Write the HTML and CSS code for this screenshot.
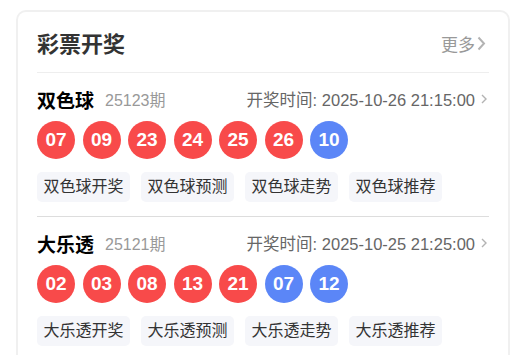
FILE: index.html
```html
<!DOCTYPE html>
<html lang="zh-CN">
<head>
    <meta charset="UTF-8">
    <title>彩票开奖</title>
    <link rel="stylesheet" href="styles.css">
</head>
<body>
    <div class="lottery-card">
        <div class="card-header">
            <h2 class="card-title">彩票开奖</h2>
            <a class="more-link" href="#">更多<svg class="chev-big" width="9" height="15" viewBox="0 0 9 15"><path d="M1.5 1.5 L7 7.5 L1.5 13.5" fill="none" stroke="#b3b3b3" stroke-width="2"/></svg></a>
        </div>

        <!-- 双色球 -->
        <div class="lottery-item">
            <div class="item-head">
                <span class="item-name">双色球</span>
                <span class="item-issue">25123期</span>
                <span class="item-time">开奖时间: 2025-10-26 21:15:00<svg class="chev" width="6" height="10" viewBox="0 0 6 10"><path d="M1 1 L5 5 L1 9" fill="none" stroke="#b3b3b3" stroke-width="1.4"/></svg></span>
            </div>
            <div class="balls">
                <span class="ball red">07</span>
                <span class="ball red">09</span>
                <span class="ball red">23</span>
                <span class="ball red">24</span>
                <span class="ball red">25</span>
                <span class="ball red">26</span>
                <span class="ball blue">10</span>
            </div>
            <div class="tags">
                <a class="tag" href="#">双色球开奖</a>
                <a class="tag" href="#">双色球预测</a>
                <a class="tag" href="#">双色球走势</a>
                <a class="tag" href="#">双色球推荐</a>
            </div>
        </div>

        <!-- 大乐透 -->
        <div class="lottery-item">
            <div class="item-head">
                <span class="item-name">大乐透</span>
                <span class="item-issue">25121期</span>
                <span class="item-time">开奖时间: 2025-10-25 21:25:00<svg class="chev" width="6" height="10" viewBox="0 0 6 10"><path d="M1 1 L5 5 L1 9" fill="none" stroke="#b3b3b3" stroke-width="1.4"/></svg></span>
            </div>
            <div class="balls">
                <span class="ball red">02</span>
                <span class="ball red">03</span>
                <span class="ball red">08</span>
                <span class="ball red">13</span>
                <span class="ball red">21</span>
                <span class="ball blue">07</span>
                <span class="ball blue">12</span>
            </div>
            <div class="tags">
                <a class="tag" href="#">大乐透开奖</a>
                <a class="tag" href="#">大乐透预测</a>
                <a class="tag" href="#">大乐透走势</a>
                <a class="tag" href="#">大乐透推荐</a>
            </div>
        </div>
    </div>
</body>
</html>
```

FILE: styles.css
```css
body {
    margin: 0;
    padding: 10px 1px 0 16px;
    background: #fff;
    font-family: "Liberation Sans", Arial, "Noto Sans CJK SC", sans-serif;
    color: #333;
}
.lottery-card {
    border: 2px solid #f0f0f0;
    border-bottom: none;
    border-radius: 10px 10px 0 0;
    padding: 0 19px;
    height: 400px;
}
.card-header {
    display: flex;
    align-items: center;
    justify-content: space-between;
    height: 60px;
    border-bottom: 1px solid #eeeeee;
}
.card-title {
    margin: 0;
    font-size: 22px;
    font-weight: bold;
    color: #333;
}
.more-link {
    display: flex;
    align-items: center;
    gap: 2px;
    margin-top: 2px;
    margin-right: 3px;
    font-size: 17px;
    color: #999;
    text-decoration: none;
}
.lottery-item {
    padding: 14px 0 14px;
    border-bottom: 1px solid #dddddd;
}
.item-head {
    display: flex;
    align-items: center;
    height: 24px;
}
.item-name {
    font-size: 19px;
    font-weight: bold;
    color: #000;
}
.item-issue {
    margin-left: 11px;
    font-size: 16px;
    color: #999;
}
.item-time {
    display: flex;
    align-items: center;
    gap: 6px;
    margin-left: auto;
    margin-right: 2px;
    font-size: 16.5px;
    color: #666;
}
.balls {
    display: flex;
    gap: 7.5px;
    margin-top: 10px;
}
.ball {
    width: 38px;
    height: 38px;
    border-radius: 50%;
    display: flex;
    align-items: center;
    justify-content: center;
    font-size: 19px;
    font-weight: bold;
    color: #fff;
}
.ball.red {
    background: #f84a4a;
}
.ball.blue {
    background: #5b86f7;
}
.tags {
    display: flex;
    gap: 11px;
    margin-top: 13px;
}
.tag {
    display: block;
    height: 30px;
    line-height: 30px;
    padding: 0 6.5px;
    border-radius: 5px;
    background: #f5f6fa;
    font-size: 16px;
    color: #333;
    text-decoration: none;
}
```
